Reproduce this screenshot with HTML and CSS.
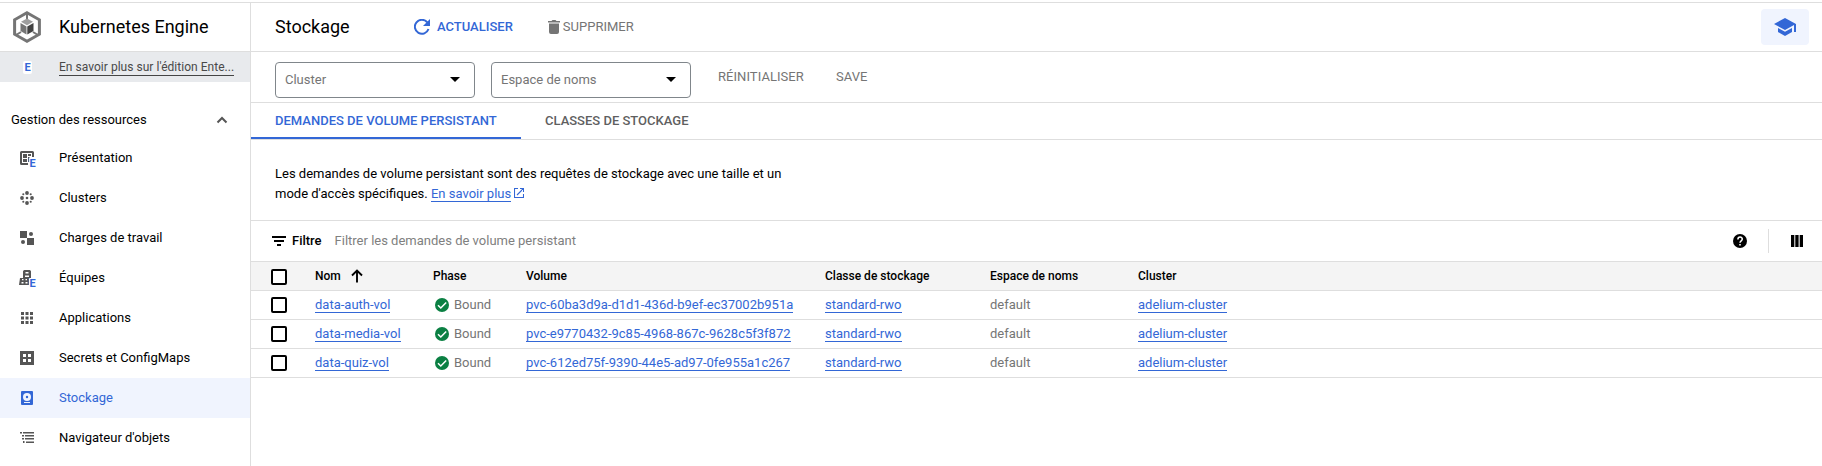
FILE: index.html
```html
<!DOCTYPE html>
<html lang="fr">
<head>
<meta charset="utf-8">
<title>Kubernetes Engine – Stockage</title>
<link rel="stylesheet" href="styles.css">
</head>
<body>
<div class="app">
  <aside class="sidebar">
    <div class="product">
      <svg class="product-logo" width="28" height="32" viewBox="0 0 28 32"><path d="M14 1.800 26.400 8.800V23.200L14 30.200 1.600 23.200V8.800Z" fill="none" stroke="#757575" stroke-width="3"/><path d="M14 3v6M3 24l5-3M25 24l-5-3" stroke="#757575" stroke-width="2"/><path d="m14 7.500 6 3.300-6 3.400-6-3.400Z" fill="#9e9e9e"/><path d="m7.500 12 6 3.400v8.100l-6-3.500Z" fill="#757575"/><path d="m20.500 12-6.200 3.400v8.100l6.200-3.500Z" fill="#424242"/></svg>
      <span class="product-name">Kubernetes Engine</span>
    </div>
    <div class="banner"><span class="badge">E</span><a class="banner-link">En savoir plus sur l'édition Ente...</a></div>
    <div class="section"><span>Gestion des ressources</span>
      <svg width="12" height="8" viewBox="0 0 12 8"><path d="m1.500 6.500 4.500-4.500 4.500 4.500" fill="none" stroke="#555" stroke-width="2"/></svg>
    </div>
    <nav class="nav">
      <a class="item"><svg class="ico" viewBox="0 0 18 18"><path d="M15 8V3.500a.5.5 0 0 0-.5-.5h-11a.5.5 0 0 0-.5.5v11a.5.5 0 0 0 .5.5H10" fill="none" stroke="#555" stroke-width="2"/><path d="M5 5h4v4H5zM5 10h4v3H5zM10 5h3v2h-3zM10 8h1.500v5H10z" fill="#555"/><text class="ico-e" x="11.500" y="18">E</text></svg><span>Présentation</span></a>
      <a class="item"><svg class="ico" viewBox="0 0 18 18" fill="#555"><circle cx="9" cy="4" r="1.900"/><circle cx="9" cy="14" r="1.900"/><circle cx="4" cy="9" r="1.900"/><circle cx="14" cy="9" r="1.900"/><circle cx="5.300" cy="5.300" r="1.050"/><circle cx="12.700" cy="5.300" r="1.050"/><circle cx="5.300" cy="12.700" r="1.050"/><circle cx="12.700" cy="12.700" r="1.050"/><circle cx="9" cy="9" r="1.300"/></svg><span>Clusters</span></a>
      <a class="item"><svg class="ico" viewBox="0 0 18 18" fill="#555"><path d="M2 2h7v7H2zM9 9h7v7H9z"/><circle cx="13" cy="5" r="2"/><circle cx="5" cy="13" r="2"/></svg><span>Charges de travail</span></a>
      <a class="item"><svg class="ico" viewBox="0 0 18 18"><path d="M5 8V2.500C5 1.500 6 1 7 1h4c1 0 2 .500 2 1.500V10h-2v6H1l1-7h3zM7.500 3v1.500h3V3zM7 6.500V8h4V6.500zM4 10v1.200h1.500V10zM7.500 10v1.200H9V10zM3.500 13v1.500h2V13zM7.500 13v1.500h2V13z" fill="#555" fill-rule="evenodd"/><text class="ico-e" x="11.500" y="18">E</text></svg><span>Équipes</span></a>
      <a class="item"><svg class="ico" viewBox="0 0 18 18" fill="#555"><path d="M3 3h3v3H3zM7.500 3h3v3h-3zM12 3h3v3h-3zM3 7.500h3v3H3zM7.500 7.500h3v3h-3zM12 7.500h3v3h-3zM3 12h3v3H3zM7.500 12h3v3h-3zM12 12h3v3h-3z"/></svg><span>Applications</span></a>
      <a class="item"><svg class="ico" viewBox="0 0 18 18"><path d="M2 2h14v14H2zM5 5v3h3V5zM10 5v3h3V5zM5 10v3h3v-3zM10 10v3h3v-3z" fill="#555" fill-rule="evenodd"/></svg><span>Secrets et ConfigMaps</span></a>
      <a class="item item-active"><svg class="ico" viewBox="0 0 18 18"><rect x="3" y="2" width="12" height="14" rx="1" fill="#3367d6"/><circle cx="9" cy="8" r="4" fill="#f0f4fe"/><circle cx="9" cy="8" r="1.200" fill="#3367d6"/><path d="M6 13h6v1H6z" fill="#f0f4fe"/></svg><span>Stockage</span></a>
      <a class="item"><svg class="ico" viewBox="0 0 18 18" fill="#555"><path d="M2 3h2v1.500H2zM5 3h11v1.500H5zM4 6h2v1.500H4zM7 6h9v1.500H7zM4 9h2v1.500H4zM7 9h9v1.500H7zM5 12h1.500v2H5zM8 12.500h8V14H8z"/></svg><span>Navigateur d'objets</span></a>
    </nav>
  </aside>
  <main class="main">
    <header class="toolbar">
      <h1 class="title">Stockage</h1>
      <button class="tool tool-refresh"><svg width="16" height="16" viewBox="0 0 16 16"><path d="M14.500 10a7 7 0 1 1-1.200-6.600" fill="none" stroke="#3367d6" stroke-width="2"/><path d="M16 0v7H9z" fill="#3367d6"/></svg><span>ACTUALISER</span></button>
      <button class="tool tool-delete"><svg width="12" height="14" viewBox="0 0 12 14" fill="#757575"><path d="M0 1h3.500l1-1h3l1 1H12v1.500H0zM1 3.500h10V12a2 2 0 0 1-2 2H3a2 2 0 0 1-2-2z"/></svg><span>SUPPRIMER</span></button>
      <button class="learn"><svg width="22" height="18" viewBox="0 0 22 18" fill="#3367d6"><path d="M11 0 0 6l11 6 9-4.900V14h2V6zM4 10v4l7 4 7-4v-4l-7 3.800z"/></svg></button>
    </header>
    <div class="filters">
      <div class="select"><span>Cluster</span><i class="caret"></i></div>
      <div class="select"><span>Espace de noms</span><i class="caret"></i></div>
      <span class="text-btn reset">RÉINITIALISER</span><span class="text-btn">SAVE</span>
    </div>
    <div class="tabs"><span class="tab tab-active">DEMANDES DE VOLUME PERSISTANT</span><span class="tab">CLASSES DE STOCKAGE</span></div>
    <section class="intro"><p>Les demandes de volume persistant sont des requêtes de stockage avec une taille et un<br>mode d'accès spécifiques. <a class="link">En savoir plus</a><svg class="ext" width="10" height="10" viewBox="0 0 10 10"><path d="M4 .5H.5v9h9V6M6 .5h3.500V4M9.500.5 3 7" fill="none" stroke="#3367d6" stroke-width="1.100"/></svg></p></section>
    <div class="table-filter">
      <svg width="14" height="10" viewBox="0 0 14 10"><path d="M0 0h14v2H0zM2 4h10v2H2zM5 8h4v2H5z"/></svg>
      <b class="filter-label">Filtre</b><span class="filter-hint">Filtrer les demandes de volume persistant</span>
      <svg class="help" width="14" height="14" viewBox="0 0 14 14"><circle cx="7" cy="7" r="7"/><path d="M4.900 5.400c0-3.200 4.400-2.900 4.400-.3C9.300 6.800 7 6.800 7 8.700" fill="none" stroke="#fff" stroke-width="1.500"/><path d="M6.200 10h1.600v1.600H6.200z" fill="#fff"/></svg>
      <i class="divider"></i>
      <svg class="columns" width="12" height="12" viewBox="0 0 12 12"><path d="M0 0h3.300v12H0zM4.300 0h3.300v12H4.300zM8.700 0H12v12H8.700z"/></svg>
    </div>
    <div class="table">
      <div class="row row-head"><i class="check"></i><span class="sort">Nom<svg width="12" height="14" viewBox="0 0 12 14"><path d="M6 13.500V2M1 6.500l5-5 5 5" fill="none" stroke="#000" stroke-width="1.900"/></svg></span><span>Phase</span><span>Volume</span><span>Classe de stockage</span><span>Espace de noms</span><span>Cluster</span></div>
      <div class="row"><i class="check"></i><a class="link">data-auth-vol</a><span class="phase"><svg width="14" height="14" viewBox="0 0 14 14"><circle cx="7" cy="7" r="7" fill="#0b8043"/><path d="m3 7.200 2.800 2.800L11.200 4.400" fill="none" stroke="#fff" stroke-width="1.500"/></svg>Bound</span><a class="link">pvc-60ba3d9a-d1d1-436d-b9ef-ec37002b951a</a><a class="link">standard-rwo</a><span>default</span><a class="link">adelium-cluster</a></div>
      <div class="row"><i class="check"></i><a class="link">data-media-vol</a><span class="phase"><svg width="14" height="14" viewBox="0 0 14 14"><circle cx="7" cy="7" r="7" fill="#0b8043"/><path d="m3 7.200 2.800 2.800L11.200 4.400" fill="none" stroke="#fff" stroke-width="1.500"/></svg>Bound</span><a class="link">pvc-e9770432-9c85-4968-867c-9628c5f3f872</a><a class="link">standard-rwo</a><span>default</span><a class="link">adelium-cluster</a></div>
      <div class="row"><i class="check"></i><a class="link">data-quiz-vol</a><span class="phase"><svg width="14" height="14" viewBox="0 0 14 14"><circle cx="7" cy="7" r="7" fill="#0b8043"/><path d="m3 7.200 2.800 2.800L11.200 4.400" fill="none" stroke="#fff" stroke-width="1.500"/></svg>Bound</span><a class="link">pvc-612ed75f-9390-44e5-ad97-0fe955a1c267</a><a class="link">standard-rwo</a><span>default</span><a class="link">adelium-cluster</a></div>
    </div>
  </main>
</div>
</body>
</html>
```
FILE: styles.css
```css
* { box-sizing: border-box; }
body { margin: 0; background: #fff; font: 13px/20px Roboto, "Liberation Sans", sans-serif; color: #000; }
svg { display: block; flex: none; }
button { border: 0; padding: 0; background: none; font: inherit; }
.app { display: flex; height: 466px; padding-top: 2px; overflow: hidden; }
.sidebar { width: 251px; flex: none; border-right: 1px solid #dedede; border-top: 1px solid #dedede; }
.main { flex: 1; min-width: 0; border-top: 1px solid #dedede; }

.product { display: flex; align-items: center; height: 49px; padding: 0 0 1px 13px; border-bottom: 1px solid #dedede; }
.product-name { margin-left: 18px; font-size: 18px; line-height: 24px; }
.banner { display: flex; align-items: center; height: 30px; padding-left: 23px; background: #e8eaed; }
.badge { width: 9px; height: 13px; border-radius: 2px; background: #fff; color: #3367d6; font: 700 11px/13px Roboto, sans-serif; text-align: center; }
.banner-link { margin-left: 27px; height: 17px; border-bottom: 1px solid #444; font-size: 12px; line-height: 17px; letter-spacing: 0.03px; color: #494949; white-space: nowrap; }
.section { display: flex; align-items: center; justify-content: space-between; height: 56px; padding: 19px 22px 0 11px; }
.item { display: flex; align-items: center; height: 40px; padding-left: 18px; }
.item span { margin-left: 23px; }
.ico { width: 18px; height: 18px; overflow: visible; }
.ico-e { font: 700 11px Roboto, sans-serif; fill: #3367d6; stroke: #fff; stroke-width: 2px; paint-order: stroke; }
.item-active { background: #f0f4fe; color: #3367d6; }

.toolbar { display: flex; align-items: center; height: 49px; padding: 0 13px 1px 24px; border-bottom: 1px solid #dedede; }
.title { margin: 0; width: 139px; font-size: 18px; font-weight: 400; line-height: 24px; }
.tool { display: flex; align-items: center; font-size: 13px; font-weight: 500; color: #3367d6; }
.tool-refresh span { margin-left: 7px; }
.tool-delete { margin-left: 35px; color: #757575; font-weight: 400; }
.tool-delete span { margin-left: 3px; }
.learn { display: flex; align-items: center; justify-content: center; width: 48px; height: 36px; margin-left: auto; border-radius: 4px; background: #f0f4fe; }

.filters { display: flex; align-items: center; height: 51px; padding: 5px 0 0 24px; border-bottom: 1px solid #dedede; color: #757575; }
.select { display: flex; align-items: center; justify-content: space-between; width: 200px; height: 36px; margin-right: 16px; padding: 0 14px 0 9px; border: 1px solid #80868b; border-radius: 4px; }
.caret { border: 5px solid transparent; border-top-color: #000; border-bottom: 0; }
.text-btn { margin-right: 32px; padding-bottom: 5px; letter-spacing: 0.06px; }
.reset { margin-left: 11px; }
.tabs { display: flex; height: 37px; border-bottom: 1px solid #dedede; font-size: 13px; font-weight: 500; color: #5f5f5f; }
.tab { height: 36px; padding: 8px 24px 0; }
.tab-active { width: 270px; border-bottom: 2px solid #3367d6; color: #3367d6; }

.intro { height: 81px; padding: 24px 24px 0; border-bottom: 1px solid #dedede; }
.intro p { margin: 0; }
.link { color: #3367d6; border-bottom: 1px solid #3367d6; }
.ext { display: inline-block; margin-left: 3px; }
.table-filter { display: flex; align-items: center; height: 41px; padding: 0 19px 0 21px; border-bottom: 1px solid #dedede; }
.filter-label { margin-left: 6px; font-weight: 500; }
.filter-hint { margin-left: 13px; color: #808080; }
.help { margin: 0 0 1px auto; }
.divider { width: 1px; height: 24px; margin: 0 22px 0 21px; background: #dedede; }
.columns { margin-bottom: 1px; }
.row { display: grid; grid-template-columns: 44px 117px 94px 299px 165px 148px 1fr; align-items: start; justify-items: start; height: 29px; padding: 4px 0 0 20px; border-bottom: 1px solid #dedede; color: #757575; line-height: 20px; }
.row-head { background: #f4f4f4; color: #000; font-size: 12px; font-weight: 500; }
.row-head span:nth-child(3) { padding-left: 1px; }
.row .link { height: 18px; }
.check { width: 16px; height: 16px; margin-top: 2px; border: 2px solid #000; border-radius: 2px; background: #fff; }
.row-head .check { margin-top: 3px; }
.sort { display: flex; align-items: center; gap: 10px; }
.phase { display: flex; align-items: center; gap: 5px; padding-left: 3px; }
```
